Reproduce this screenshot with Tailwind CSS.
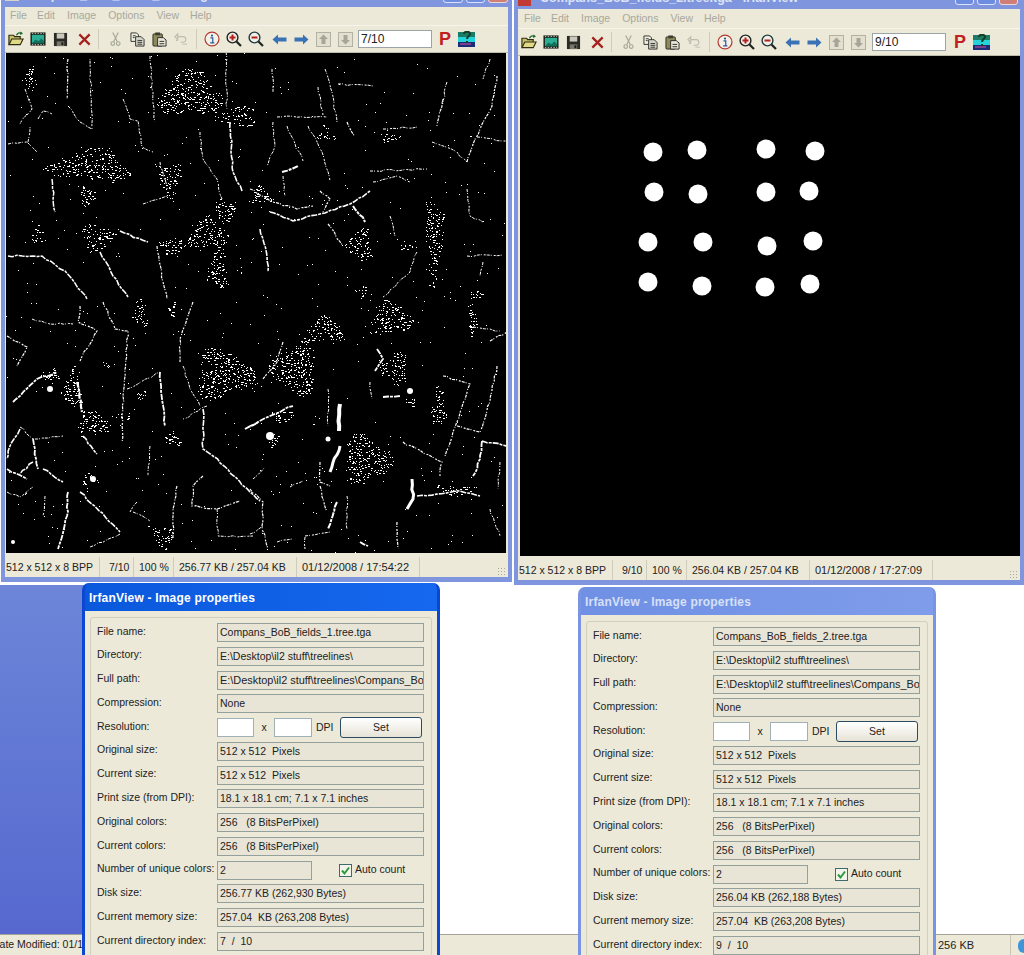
<!DOCTYPE html>
<html lang="en">
<head>
<meta charset="UTF-8" />
<meta name="viewport" content="width=device-width, initial-scale=1.0"/>
<title>IrfanView - two images and their properties</title>
<script src="https://cdn.jsdelivr.net/npm/@tailwindcss/browser@4"></script>
</head>
<body class="bg-white font-['Liberation_Sans',Arial,sans-serif] text-[10.5px] text-[#222]">
<!-- toolbar icons, used by both windows -->
<svg width="0" height="0" class="absolute">
  <symbol id="i-open" viewBox="0 0 17 16">
    <path d="M1 14V4h5l1 1.500h6V8" fill="#c9c26a" stroke="#2c2c10" stroke-width="1.200"/>
    <path d="M1 14l3-6h12l-3 6z" fill="#e2d987" stroke="#2c2c10" stroke-width="1.200"/>
    <path d="M9 4c1-2.500 3-3 5-2" fill="none" stroke="#1e6b2c" stroke-width="1.400"/>
    <path d="M13 0l3 2-3 2z" fill="#1e6b2c"/>
  </symbol>
  <symbol id="i-film" viewBox="0 0 17 16">
    <rect x="0.500" y="1" width="16" height="14" fill="#1b1b16"/>
    <rect x="2" y="3.500" width="13" height="9" fill="#2cae94"/>
    <path d="M2 12.500l4-4 3 2 3-3 3 3v2z" fill="#12705a"/>
    <path d="M2 2h13M2 14h13" stroke="#d8d8c8" stroke-width="1" stroke-dasharray="1.500 1.500"/>
  </symbol>
  <symbol id="i-save" viewBox="0 0 16 16">
    <path d="M1 1h14v14H1z" fill="#2b2b26"/>
    <rect x="4" y="1.500" width="8" height="5.500" fill="#c9c8ba"/>
    <rect x="4" y="10" width="8" height="5" fill="#77766a"/>
    <rect x="9" y="11" width="2" height="3" fill="#1b1b16"/>
  </symbol>
  <symbol id="i-del" viewBox="0 0 16 16">
    <path d="M2.500 2.500l11 11M13.500 2.500l-11 11" stroke="#a3221f" stroke-width="2.400"/>
  </symbol>
  <symbol id="i-cut" viewBox="0 0 12 16">
    <path d="M3 1l5 10M9 1L4 11" stroke="#a5a596" stroke-width="1.200" fill="none"/>
    <circle cx="3" cy="13" r="2" fill="none" stroke="#a5a596" stroke-width="1.200"/>
    <circle cx="9" cy="13" r="2" fill="none" stroke="#a5a596" stroke-width="1.200"/>
  </symbol>
  <symbol id="i-copy" viewBox="0 0 16 16">
    <path d="M1 1h6l2 2v7H1z" fill="#f0f0e4" stroke="#30302a"/>
    <path d="M6 5h6l3 3v7H6z" fill="#d8d8cc" stroke="#30302a"/>
    <path d="M8 9h5M8 11h5M8 13h5M3 4h3M3 6h2" stroke="#30302a"/>
  </symbol>
  <symbol id="i-paste" viewBox="0 0 16 16">
    <rect x="1" y="2" width="10" height="13" rx="1" fill="#8f8a5c" stroke="#2c2c22"/>
    <rect x="3.500" y="0.500" width="5" height="3" fill="#3b3b32"/>
    <path d="M6 6h6l3 2.500V15H6z" fill="#e8e8dc" stroke="#2c2c22"/>
    <path d="M8 10h5M8 12.500h5" stroke="#2c2c22"/>
  </symbol>
  <symbol id="i-undo" viewBox="0 0 15 15">
    <path d="M4 9H2M1 5l3-3v6zM4 5h6c3 0 4 5 0 6H7" fill="none" stroke="#bdbcaf" stroke-width="1.200"/>
    <path d="M9 13h5" stroke="#bdbcaf"/>
  </symbol>
  <symbol id="i-info" viewBox="0 0 17 17">
    <circle cx="8.500" cy="8.500" r="7.400" fill="#f4f2e8" stroke="#b23a32" stroke-width="1.300"/>
    <circle cx="8.500" cy="4.800" r="1.200" fill="#2a5c9c"/>
    <path d="M6.800 7.300h2.500v5.200M6.500 12.700h4.500" fill="none" stroke="#2a5c9c" stroke-width="1.300"/>
  </symbol>
  <symbol id="i-zin" viewBox="0 0 16 16">
    <circle cx="6.500" cy="6.500" r="5.400" fill="#f2efe6" stroke="#1f2420" stroke-width="1.400"/>
    <path d="M3.500 6.500h6M6.500 3.500v6" stroke="#b3201e" stroke-width="2"/>
    <path d="M10.500 10.500l4.500 4.500" stroke="#1f2420" stroke-width="2.200"/>
  </symbol>
  <symbol id="i-zout" viewBox="0 0 16 16">
    <circle cx="6.500" cy="6.500" r="5.400" fill="#f2efe6" stroke="#1f3a40" stroke-width="1.400"/>
    <path d="M3.500 6.500h6" stroke="#b3201e" stroke-width="2"/>
    <path d="M10.500 10.500l4.500 4.500" stroke="#1f2420" stroke-width="2.200"/>
  </symbol>
  <symbol id="i-left" viewBox="0 0 15 11">
    <path d="M0.500 5.500L6 0.500v3h8.500v4H6v3z" fill="#3a72b6"/>
  </symbol>
  <symbol id="i-right" viewBox="0 0 15 11">
    <path d="M14.500 5.500L9 0.500v3H0.500v4H9v3z" fill="#3a72b6"/>
  </symbol>
  <symbol id="i-up" viewBox="0 0 15 15">
    <rect x="0.500" y="0.500" width="14" height="14" fill="#e3e0d0" stroke="#b3b2a2"/>
    <path d="M7.500 2.500L12 7H9.500v5h-4V7H3z" fill="#a6a598"/>
  </symbol>
  <symbol id="i-down" viewBox="0 0 15 15">
    <rect x="0.500" y="0.500" width="14" height="14" fill="#e3e0d0" stroke="#b3b2a2"/>
    <path d="M7.500 12.500L12 8H9.500V3h-4v5H3z" fill="#a6a598"/>
  </symbol>
  <symbol id="i-pic" viewBox="0 0 17 16">
    <rect x="0" y="1" width="17" height="5" fill="#1c7a66"/>
    <rect x="0" y="6" width="17" height="5" fill="#25d4d8"/>
    <rect x="0" y="11" width="17" height="5" fill="#1d2c78"/>
    <path d="M2 13h11" stroke="#7c3f8c" stroke-width="2"/>
    <path d="M6 3c0-3 6-3 6 0 0 2-3 2-3 5M9 10v2" fill="none" stroke="#123f24" stroke-width="2"/>
  </symbol>
</svg>

<div class="relative w-[1024px] h-[955px] overflow-hidden">

  <!-- what lies behind the windows -->
  <div class="absolute left-0 top-[585px] w-[90px] h-[350px] bg-gradient-to-b from-[#6d86d8] to-[#5668cf]"></div>
  <div class="absolute left-0 right-0 bottom-0 h-[21px] border-t border-[#a3a39a] bg-[#ece9d8] flex items-center justify-between text-[11px]">
    <div class="w-[82px] overflow-hidden"><span class="block ml-[-8px] whitespace-nowrap text-[10.5px]">Date Modified: 01/12/2008</span></div>
    <div class="flex items-center h-full">
      <span class="w-[72px]">256 KB</span>
      <span class="w-[14px] h-full border-l border-[#c8c5b4] pl-[7px] pt-[4px]"><span class="block w-[12px] h-[14px] rounded-full bg-[#3f95d8]"></span></span>
    </div>
  </div>

  <!-- left viewer window -->
  <div class="absolute left-[1px] top-[-16px] w-[511px] border-x-4 border-b-[5px] border-[#7f95de] bg-[#7f95de] flex flex-col">
    <div class="h-[23px] flex justify-between">
      <div class="flex items-end gap-[4px] pb-[6px] text-[12.5px] font-bold text-[#dce4f8] leading-none">
        <span class="w-[14px] h-[8px] bg-[#d8d4cc]"></span>
        <span class="whitespace-nowrap">Compans_BoB_fields_1.tree.tga - IrfanView</span>
      </div>
      <div class="flex gap-[3px]">
        <span class="w-[20px] h-[19px] rounded-[3px] border border-[#dbe3f8] bg-[#6c8de0]"></span>
        <span class="w-[19px] h-[19px] rounded-[3px] border border-[#dbe3f8] bg-[#6c8de0]"></span>
        <span class="w-[20px] h-[19px] rounded-[3px] border border-[#eed8d4] bg-[#cf7f78]"></span>
      </div>
    </div>
    <div class="bg-[#ece9d8]">
      <div class="h-[19px] flex items-center pl-[5px] gap-[12px] text-[#a9a89c] border-b border-[#f7f5ea]">
        <span>File</span><span class="ml-[-2px]">Edit</span><span>Image</span><span>Options</span><span>View</span><span class="ml-[-1px]">Help</span>
      </div>
      <div class="h-[27px] flex items-center border-b border-[#bdbbaa]">
        <svg class="w-[16px] h-[16px] ml-[3px]"><use href="#i-open"/></svg>
        <svg class="w-[16px] h-[16px] ml-[6px]"><use href="#i-film"/></svg>
        <svg class="w-[15px] h-[15px] ml-[7px]"><use href="#i-save"/></svg>
        <svg class="w-[15px] h-[15px] ml-[9px]"><use href="#i-del"/></svg>
        <span class="w-px h-[20px] bg-[#cfccbc] ml-[6px]"></span>
        <svg class="w-[11px] h-[16px] ml-[11px]"><use href="#i-cut"/></svg>
        <svg class="w-[15px] h-[15px] ml-[9px]"><use href="#i-copy"/></svg>
        <svg class="w-[15px] h-[15px] ml-[7px]"><use href="#i-paste"/></svg>
        <svg class="w-[14px] h-[14px] ml-[7px]"><use href="#i-undo"/></svg>
        <span class="w-px h-[20px] bg-[#cfccbc] ml-[8px]"></span>
        <svg class="w-[16px] h-[16px] ml-[7px]"><use href="#i-info"/></svg>
        <svg class="w-[16px] h-[16px] ml-[6px]"><use href="#i-zin"/></svg>
        <svg class="w-[16px] h-[16px] ml-[6px]"><use href="#i-zout"/></svg>
        <svg class="w-[15px] h-[11px] ml-[8px]"><use href="#i-left"/></svg>
        <svg class="w-[15px] h-[11px] ml-[7px]"><use href="#i-right"/></svg>
        <svg class="w-[15px] h-[15px] ml-[7px]"><use href="#i-up"/></svg>
        <svg class="w-[15px] h-[15px] ml-[7px]"><use href="#i-down"/></svg>
        <div class="w-[74px] h-[18px] ml-[5px] bg-white border border-[#9aa5a8] pl-[2px] text-[12px] leading-[16px]">7/10</div>
        <span class="w-[12px] ml-[7px] font-bold text-[18px] leading-none text-[#c0201e]">P</span>
        <svg class="w-[17px] h-[16px] ml-[7px]"><use href="#i-pic"/></svg>
      </div>
      <div class="pl-px h-[500px] pr-px">
        <svg id="fields" class="block w-[500px] h-[500px] bg-black" viewBox="6 54 500 500"></svg>
      </div>
      <div class="h-[24px] pt-[3px] flex items-center pl-px whitespace-nowrap">
        <span class="w-[94px] h-[20px] leading-[20px] border-r border-[#cfccbc]">512 x 512 x 8 BPP</span>
        <span class="w-[34px] pl-[9px] h-[20px] leading-[20px] border-r border-[#cfccbc]">7/10</span>
        <span class="w-[40px] pl-[5px] h-[20px] leading-[20px] border-r border-[#cfccbc]">100 %</span>
        <span class="w-[123px] pl-[5px] h-[20px] leading-[20px] border-r border-[#cfccbc]">256.77 KB / 257.04 KB</span>
        <span class="w-[123px] pl-[5px] h-[20px] leading-[20px] border-r border-[#cfccbc] text-[11px]">01/12/2008 / 17:54:22</span>
        <span class="ml-auto w-[9px] h-[9px] mr-[2px] mt-[10px] bg-[radial-gradient(#aaa89a_1px,transparent_1px)] bg-[length:3px_3px]"></span>
      </div>
    </div>
  </div>

  <!-- right viewer window -->
  <div class="absolute left-[514px] top-[-14px] w-[510px] border-x-4 border-b-[5px] border-[#7f95de] bg-[#7f95de] flex flex-col">
    <div class="h-[23px] flex justify-between">
      <div class="flex items-end gap-[9px] pb-[5px] text-[12.5px] font-bold text-[#dce4f8] leading-none">
        <span class="w-[13px] h-[6px] bg-[#c23a34] translate-y-[2px]"></span>
        <span class="whitespace-nowrap">Compans_BoB_fields_2.tree.tga - IrfanView</span>
      </div>
      <div class="flex gap-[3px] pr-[2px]">
        <span class="w-[19px] h-[19px] rounded-[3px] border border-[#dbe3f8] bg-[#6c8de0]"></span>
        <span class="w-[19px] h-[19px] rounded-[3px] border border-[#dbe3f8] bg-[#6c8de0]"></span>
        <span class="w-[19px] h-[19px] rounded-[3px] border border-[#eed8d4] bg-[#cf7f78]"></span>
      </div>
    </div>
    <div class="bg-[#ece9d8]">
      <div class="h-[20px] flex items-center pl-[6px] gap-[12px] text-[#a9a89c] border-b border-[#f7f5ea]">
        <span>File</span><span class="ml-[-2px]">Edit</span><span>Image</span><span>Options</span><span>View</span><span class="ml-[-1px]">Help</span>
      </div>
      <div class="h-[27px] flex items-center border-b border-[#bdbbaa]">
        <svg class="w-[16px] h-[16px] ml-[3px]"><use href="#i-open"/></svg>
        <svg class="w-[16px] h-[16px] ml-[6px]"><use href="#i-film"/></svg>
        <svg class="w-[15px] h-[15px] ml-[7px]"><use href="#i-save"/></svg>
        <svg class="w-[15px] h-[15px] ml-[9px]"><use href="#i-del"/></svg>
        <span class="w-px h-[20px] bg-[#cfccbc] ml-[6px]"></span>
        <svg class="w-[11px] h-[16px] ml-[11px]"><use href="#i-cut"/></svg>
        <svg class="w-[15px] h-[15px] ml-[9px]"><use href="#i-copy"/></svg>
        <svg class="w-[15px] h-[15px] ml-[7px]"><use href="#i-paste"/></svg>
        <svg class="w-[14px] h-[14px] ml-[7px]"><use href="#i-undo"/></svg>
        <span class="w-px h-[20px] bg-[#cfccbc] ml-[8px]"></span>
        <svg class="w-[16px] h-[16px] ml-[7px]"><use href="#i-info"/></svg>
        <svg class="w-[16px] h-[16px] ml-[6px]"><use href="#i-zin"/></svg>
        <svg class="w-[16px] h-[16px] ml-[6px]"><use href="#i-zout"/></svg>
        <svg class="w-[15px] h-[11px] ml-[8px]"><use href="#i-left"/></svg>
        <svg class="w-[15px] h-[11px] ml-[7px]"><use href="#i-right"/></svg>
        <svg class="w-[15px] h-[15px] ml-[7px]"><use href="#i-up"/></svg>
        <svg class="w-[15px] h-[15px] ml-[7px]"><use href="#i-down"/></svg>
        <div class="w-[74px] h-[18px] ml-[6px] bg-white border border-[#9aa5a8] pl-[2px] text-[12px] leading-[16px]">9/10</div>
        <span class="w-[12px] ml-[8px] font-bold text-[18px] leading-none text-[#c0201e]">P</span>
        <svg class="w-[17px] h-[16px] ml-[7px]"><use href="#i-pic"/></svg>
      </div>
      <div class="pl-[2px] h-[500px]">
        <svg class="block w-[500px] h-[500px] bg-black" viewBox="520 56 500 500" fill="#fff">
          <circle cx="653" cy="152" r="9.500"/><circle cx="697" cy="150" r="9.500"/><circle cx="766" cy="149" r="9.500"/><circle cx="815" cy="151" r="9.500"/>
          <circle cx="654" cy="192" r="9.500"/><circle cx="698" cy="194" r="9.500"/><circle cx="766" cy="192" r="9.500"/><circle cx="809" cy="191" r="9.500"/>
          <circle cx="648" cy="242" r="9.500"/><circle cx="703" cy="242" r="9.500"/><circle cx="767" cy="246" r="9.500"/><circle cx="813" cy="241" r="9.500"/>
          <circle cx="648" cy="282" r="9.500"/><circle cx="702" cy="286" r="9.500"/><circle cx="765" cy="287" r="9.500"/><circle cx="810" cy="284" r="9.500"/>
        </svg>
      </div>
      <div class="h-[24px] pt-[3px] flex items-center pl-px whitespace-nowrap">
        <span class="w-[94px] h-[20px] leading-[20px] border-r border-[#cfccbc]">512 x 512 x 8 BPP</span>
        <span class="w-[34px] pl-[9px] h-[20px] leading-[20px] border-r border-[#cfccbc]">9/10</span>
        <span class="w-[40px] pl-[5px] h-[20px] leading-[20px] border-r border-[#cfccbc]">100 %</span>
        <span class="w-[123px] pl-[5px] h-[20px] leading-[20px] border-r border-[#cfccbc]">256.04 KB / 257.04 KB</span>
        <span class="w-[123px] pl-[5px] h-[20px] leading-[20px] border-r border-[#cfccbc] text-[11px]">01/12/2008 / 17:27:09</span>
        <span class="ml-auto w-[9px] h-[9px] mr-[2px] mt-[10px] bg-[radial-gradient(#aaa89a_1px,transparent_1px)] bg-[length:3px_3px]"></span>
      </div>
    </div>
  </div>

  <!-- left properties dialog -->
  <div class="absolute left-[82px] top-[583px] w-[358px] h-[390px] rounded-t-[7px] border-x-[3px] border-[#0b47d0] bg-gradient-to-r from-[#0a58dc] to-[#1668ee]">
    <div class="h-[28px] pl-[4px] pt-[8px] text-[12px] leading-[15px] font-bold text-white tracking-[0.2px]">IrfanView - Image properties</div>
    <div class="bg-[#ece9d8] h-[360px] pt-[6px] px-[5px]">
      <div class="h-[340px] border border-[#d2cfbe] rounded-[3px] pt-[5px] pl-[6px] grid grid-cols-[120px_207px] auto-rows-[19px] gap-y-[4.770px] items-center [&>span]:-translate-y-px">
        <span>File name:</span><div class="h-full px-[2px] leading-[17px] border border-[#93a09c] bg-[#e8e5d6]">Compans_BoB_fields_1.tree.tga</div>
        <span>Directory:</span><div class="h-full px-[2px] leading-[17px] border border-[#93a09c] bg-[#e8e5d6]">E:\Desktop\il2 stuff\treelines\</div>
        <span>Full path:</span><div class="h-full px-[2px] leading-[17px] border border-[#93a09c] bg-[#e8e5d6] overflow-hidden whitespace-nowrap text-[10.9px]">E:\Desktop\il2 stuff\treelines\Compans_BoB_fields_1.tree.tga</div>
        <span>Compression:</span><div class="h-full px-[2px] leading-[17px] border border-[#93a09c] bg-[#e8e5d6]">None</div>
        <span>Resolution:</span>
        <div class="flex items-center h-[21px]">
          <span class="w-[37px] h-[19px] bg-white border border-[#9fb0b8]"></span>
          <span class="w-[20px] text-center">x</span>
          <span class="w-[38px] h-[19px] bg-white border border-[#9fb0b8]"></span>
          <span class="ml-[4px] w-[24px]">DPI</span>
          <span class="w-[82px] h-[21px] rounded-[3px] border border-[#2f4a63] bg-gradient-to-b from-white to-[#e6e3d6] text-center leading-[19px]">Set</span>
        </div>
        <span>Original size:</span><div class="h-full px-[2px] leading-[17px] border border-[#93a09c] bg-[#e8e5d6] whitespace-pre">512 x 512  Pixels</div>
        <span>Current size:</span><div class="h-full px-[2px] leading-[17px] border border-[#93a09c] bg-[#e8e5d6] whitespace-pre">512 x 512  Pixels</div>
        <span>Print size (from DPI):</span><div class="h-full px-[2px] leading-[17px] border border-[#93a09c] bg-[#e8e5d6]">18.1 x 18.1 cm; 7.1 x 7.1 inches</div>
        <span>Original colors:</span><div class="h-full px-[2px] leading-[17px] border border-[#93a09c] bg-[#e8e5d6] whitespace-pre">256   (8 BitsPerPixel)</div>
        <span>Current colors:</span><div class="h-full px-[2px] leading-[17px] border border-[#93a09c] bg-[#e8e5d6] whitespace-pre">256   (8 BitsPerPixel)</div>
        <span class="whitespace-nowrap">Number of unique colors:</span>
        <div class="flex items-center h-full">
          <div class="w-[95px] h-full px-[2px] leading-[17px] border border-[#93a09c] bg-[#e8e5d6]">2</div>
          <svg class="w-[13px] h-[13px] ml-[27px]" viewBox="0 0 13 13"><rect x="0.500" y="0.500" width="12" height="12" fill="#f4f4ec" stroke="#3f6a70"/><path d="M3 6.500l2.500 3L10 3.500" fill="none" stroke="#2e9a3a" stroke-width="2"/></svg>
          <span class="ml-[3px]">Auto count</span>
        </div>
        <span>Disk size:</span><div class="h-full px-[2px] leading-[17px] border border-[#93a09c] bg-[#e8e5d6]">256.77 KB (262,930 Bytes)</div>
        <span>Current memory size:</span><div class="h-full px-[2px] leading-[17px] border border-[#93a09c] bg-[#e8e5d6] whitespace-pre">257.04  KB (263,208 Bytes)</div>
        <span>Current directory index:</span><div class="h-full px-[2px] leading-[17px] border border-[#93a09c] bg-[#e8e5d6] whitespace-pre">7  /  10</div>
      </div>
    </div>
  </div>

  <!-- right properties dialog -->
  <div class="absolute left-[578px] top-[587px] w-[358px] h-[390px] rounded-t-[7px] border-x-[3px] border-[#7a94e4] bg-gradient-to-r from-[#6f90e4] to-[#7f9cea]">
    <div class="h-[28px] pl-[4px] pt-[8px] text-[12px] leading-[15px] font-bold text-[#d7e0f7] tracking-[0.2px]">IrfanView - Image properties</div>
    <div class="bg-[#ece9d8] h-[360px] pt-[6px] px-[5px]">
      <div class="h-[340px] border border-[#d2cfbe] rounded-[3px] pt-[5px] pl-[6px] grid grid-cols-[120px_207px] auto-rows-[19px] gap-y-[4.770px] items-center [&>span]:-translate-y-px">
        <span>File name:</span><div class="h-full px-[2px] leading-[17px] border border-[#93a09c] bg-[#e8e5d6]">Compans_BoB_fields_2.tree.tga</div>
        <span>Directory:</span><div class="h-full px-[2px] leading-[17px] border border-[#93a09c] bg-[#e8e5d6]">E:\Desktop\il2 stuff\treelines\</div>
        <span>Full path:</span><div class="h-full px-[2px] leading-[17px] border border-[#93a09c] bg-[#e8e5d6] overflow-hidden whitespace-nowrap text-[10.9px]">E:\Desktop\il2 stuff\treelines\Compans_BoB_fields_2.tree.tga</div>
        <span>Compression:</span><div class="h-full px-[2px] leading-[17px] border border-[#93a09c] bg-[#e8e5d6]">None</div>
        <span>Resolution:</span>
        <div class="flex items-center h-[21px]">
          <span class="w-[37px] h-[19px] bg-white border border-[#9fb0b8]"></span>
          <span class="w-[20px] text-center">x</span>
          <span class="w-[38px] h-[19px] bg-white border border-[#9fb0b8]"></span>
          <span class="ml-[4px] w-[24px]">DPI</span>
          <span class="w-[82px] h-[21px] rounded-[3px] border border-[#2f4a63] bg-gradient-to-b from-white to-[#e6e3d6] text-center leading-[19px]">Set</span>
        </div>
        <span>Original size:</span><div class="h-full px-[2px] leading-[17px] border border-[#93a09c] bg-[#e8e5d6] whitespace-pre">512 x 512  Pixels</div>
        <span>Current size:</span><div class="h-full px-[2px] leading-[17px] border border-[#93a09c] bg-[#e8e5d6] whitespace-pre">512 x 512  Pixels</div>
        <span>Print size (from DPI):</span><div class="h-full px-[2px] leading-[17px] border border-[#93a09c] bg-[#e8e5d6]">18.1 x 18.1 cm; 7.1 x 7.1 inches</div>
        <span>Original colors:</span><div class="h-full px-[2px] leading-[17px] border border-[#93a09c] bg-[#e8e5d6] whitespace-pre">256   (8 BitsPerPixel)</div>
        <span>Current colors:</span><div class="h-full px-[2px] leading-[17px] border border-[#93a09c] bg-[#e8e5d6] whitespace-pre">256   (8 BitsPerPixel)</div>
        <span class="whitespace-nowrap">Number of unique colors:</span>
        <div class="flex items-center h-full">
          <div class="w-[95px] h-full px-[2px] leading-[17px] border border-[#93a09c] bg-[#e8e5d6]">2</div>
          <svg class="w-[13px] h-[13px] ml-[27px]" viewBox="0 0 13 13"><rect x="0.500" y="0.500" width="12" height="12" fill="#f4f4ec" stroke="#3f6a70"/><path d="M3 6.500l2.500 3L10 3.500" fill="none" stroke="#2e9a3a" stroke-width="2"/></svg>
          <span class="ml-[3px]">Auto count</span>
        </div>
        <span>Disk size:</span><div class="h-full px-[2px] leading-[17px] border border-[#93a09c] bg-[#e8e5d6]">256.04 KB (262,188 Bytes)</div>
        <span>Current memory size:</span><div class="h-full px-[2px] leading-[17px] border border-[#93a09c] bg-[#e8e5d6] whitespace-pre">257.04  KB (263,208 Bytes)</div>
        <span>Current directory index:</span><div class="h-full px-[2px] leading-[17px] border border-[#93a09c] bg-[#e8e5d6] whitespace-pre">9  /  10</div>
      </div>
    </div>
  </div>
</div>

<script>
  // tree line mask of the left image, traced in page coordinates
  const lines = [
    [1,"38,120 43,112 52,115"],[1,"28,143 30,128"],[1,"8,145 27,143 37,153"],[1.5,"52,180 55,213"],[1.5,"8,257 42,257 65,272 82,293 87,300"],
    [1,"68,107 80,123 92,130 90,60"],[1.2,"68,60 67,100"],[1,"123,100 130,120 138,122 142,148 153,153"],[1,"160,163 167,190"],[1,"143,205 167,197"],
    [1,"150,57 155,123"],[1,"226,53 227,110"],[1,"200,133 203,160 217,180 222,200"],[1.6,"230,123 233,173 242,192"],[1.2,"157,247 163,283 167,300"],
    [1.6,"120,232 148,243"],[1.6,"100,253 113,277 128,298"],[1,"25,90 32,110 20,125"],
    [1,"273,123 275,147 267,168"],[1,"287,127 303,162"],[1,"277,118 327,118"],[2,"282,173 298,167"],[1,"283,177 285,197"],[1.2,"250,190 270,202 297,210 313,207"],
    [1.6,"270,213 293,222 320,215 350,205 370,192"],[1.2,"320,192 330,200 323,213"],[2,"353,207 365,223"],[1.2,"328,225 343,247"],[1,"308,127 322,153 330,182"],
    [1,"318,88 323,117"],[1,"325,70 332,93 337,123"],[1.2,"347,123 355,138"],[1,"338,85 373,87"],[1,"272,70 273,93"],[1,"383,130 417,128"],[1,"370,172 427,170"],
    [1,"373,183 397,177 410,183"],[1,"432,143 457,153 467,163"],[1.2,"467,163 480,130 492,107 497,77"],[1,"477,138 507,142"],[1.2,"443,100 437,127"],[1,"447,83 442,107"],
    [1,"490,60 483,80"],[1,"467,190 470,217 483,223"],[1.6,"260,230 267,257 268,273"],[1,"417,253 410,273 383,298"],[1,"390,217 395,237"],[1,"467,257 503,256"],[1,"483,263 480,277"],
    [1.2,"7,337 27,348 17,367"],[1.6,"7,470 27,480"],[1,"7,493 20,498 33,488"],[1,"32,320 50,325 73,325"],[1.2,"80,307 78,323 97,332 80,362"],
    [1.2,"103,303 115,330 128,332 123,397 122,443"],[1,"127,390 160,373"],[1.2,"193,303 180,340 180,363"],[1,"183,367 190,390 200,407"],[1,"207,407 183,420"],
    [1.6,"203,410 203,450 213,457 250,493 260,502"],[1.2,"203,477 193,487 192,507 217,510 240,502"],[1,"217,510 218,537 253,537"],[1.2,"177,487 173,510 173,540"],
    [1,"150,447 148,477"],[1,"133,513 150,522"],[1,"137,503 130,513"],[1.8,"68,493 67,517 58,550"],[1.6,"80,493 120,533"],[1,"120,535 90,548"],[1,"45,497 43,517"],
    [1.6,"33,463 20,475"],[1.6,"43,470 63,483"],[1,"20,428 33,440 63,437"],[1.6,"20,430 10,447 7,460"],[1.8,"33,440 38,470"],[1.8,"13,403 37,380 57,373"],[1.6,"83,437 97,455"],[2,"245,430 258,423"],
    [2.2,"77,383 82,413"],[1.8,"160,373 165,427"],
    [1.8,"250,427 270,417 293,407"],[1.2,"283,343 277,363 263,380"],[1,"328,390 328,427"],[1.8,"377,350 383,360 375,372"],[1,"370,383 372,400"],[1.8,"383,398 400,397"],
    [1.2,"443,377 470,385 455,428 445,457"],[1.2,"457,427 480,433 490,403 497,367"],[1.6,"482,442 507,447"],[1.8,"482,442 480,460 473,477"],[1.2,"403,443 442,463 440,477"],
    [1.6,"417,497 460,492 480,497"],[1,"490,510 500,537"],[1.2,"320,463 320,483 330,487"],[1,"347,497 347,530"],[2,"337,503 328,530"],[1.2,"320,487 327,513"],
    [1.2,"250,490 263,503 262,527 268,550"],[1,"250,535 263,527"],[1,"305,538 305,550"],[1,"305,537 330,533"],[1,"277,543 292,540"],[1.8,"360,543 368,547"],[1.2,"397,523 398,550"],
    [1,"253,480 265,468"],[1,"290,488 303,482"],[1,"500,463 498,490"],[1.2,"490,342 507,333"],[1,"473,328 500,332"],
    [4,"340,405 339,432"],[3,"330,473 340,447"],[3,"412,480 413,500 407,510"]
  ];
  const blobs = [[270,437,4],[410,392,3],[328,440,2.500],[50,390,3],[93,480,3],[13,543,2]];
  // cx, cy, rx, ry of the speckled patches
  const patches = [
    [190,95,35,25],[237,117,22,12],[90,167,45,18],[97,238,18,14],[173,247,16,8],[207,235,22,18],[225,212,12,14],[217,270,12,22],[170,180,12,20],[87,197,8,12],[38,237,8,10],[30,80,7,13],
    [260,197,14,10],[325,135,10,8],[390,138,12,5],[434,240,10,50],[360,245,14,18],[405,248,10,5],[362,293,6,8],[475,295,8,6],
    [222,375,32,28],[52,375,12,8],[72,390,10,22],[92,425,18,15],[123,417,10,6],[140,315,8,15],[142,395,7,5],[107,365,6,5],[173,440,10,7],[88,480,9,7],[162,537,12,13],[172,310,5,10],
    [323,331,20,15],[295,370,25,30],[390,320,25,18],[395,370,15,18],[365,460,27,28],[283,417,13,7],[438,408,8,22],[472,322,5,18],[273,441,7,8],[411,402,8,5],[455,490,22,5]
  ];
  let seed = 7;
  const rnd = () => (seed = (seed * 16807) % 2147483647) / 2147483647;
  let speck = "";
  const dot = (x, y, s) => { speck += `M${Math.round(x)} ${Math.round(y)}h${s}v1h-${s}z`; };
  // each patch is an even mesh of short chains on a coarse grid, with a ragged outline
  patches.forEach(([cx, cy, rx, ry]) => {
    const phase = rnd() * 6.283;
    for (let gx = -rx; gx <= rx; gx += 3) {
      for (let gy = -ry; gy <= ry; gy += 3) {
        const a = Math.atan2(gy / ry, gx / rx);
        if (Math.hypot(gx / rx, gy / ry) > 0.85 + 0.2 * Math.sin(3 * a + phase)) continue;
        if (rnd() < 0.22) continue;
        let x = cx + gx + (rnd() - 0.5) * 2, y = cy + gy + (rnd() - 0.5) * 2;
        let dir = rnd() * 6.283;
        const steps = rnd() < 0.35 ? 2 : 1;
        for (let s = 0; s < steps; s++) {
          dot(x, y, rnd() < 0.3 ? 2 : 1);
          x += Math.cos(dir) * 1.5;
          y += Math.sin(dir) * 1.5;
        }
      }
    }
  });
  for (let i = 0; i < 550; i++) dot(6 + rnd() * 500, 54 + rnd() * 500, 1);
  let out = `<path d="${speck}" fill="#fff"/>`;
  lines.forEach(([w, pts]) => {
    // break each stroke into short wobbling steps, the mask is never a clean line
    const p = pts.split(" ").map(q => q.split(",").map(Number));
    let d = `M${p[0][0]} ${p[0][1]}`;
    for (let i = 1; i < p.length; i++) {
      const [ax, ay] = p[i - 1], [bx, by] = p[i];
      const n = Math.max(1, Math.round(Math.hypot(bx - ax, by - ay) / 5));
      for (let k = 1; k <= n; k++) {
        const jx = k === n ? 0 : (rnd() - 0.5) * 1.8, jy = k === n ? 0 : (rnd() - 0.5) * 1.8;
        d += `L${(ax + (bx - ax) * k / n + jx).toFixed(1)} ${(ay + (by - ay) * k / n + jy).toFixed(1)}`;
      }
    }
    const dash = w < 1.4 ? "3 1 1 2 2 1" : w < 3 ? "6 1 3 1" : "none";
    out += `<path d="${d}" fill="none" stroke="#fff" stroke-width="${w}" stroke-dasharray="${dash}"/>`;
  });
  blobs.forEach(([x, y, r]) => { out += `<circle cx="${x}" cy="${y}" r="${r}" fill="#fff"/>`; });
  document.getElementById("fields").innerHTML = out;
</script>
</body>
</html>
